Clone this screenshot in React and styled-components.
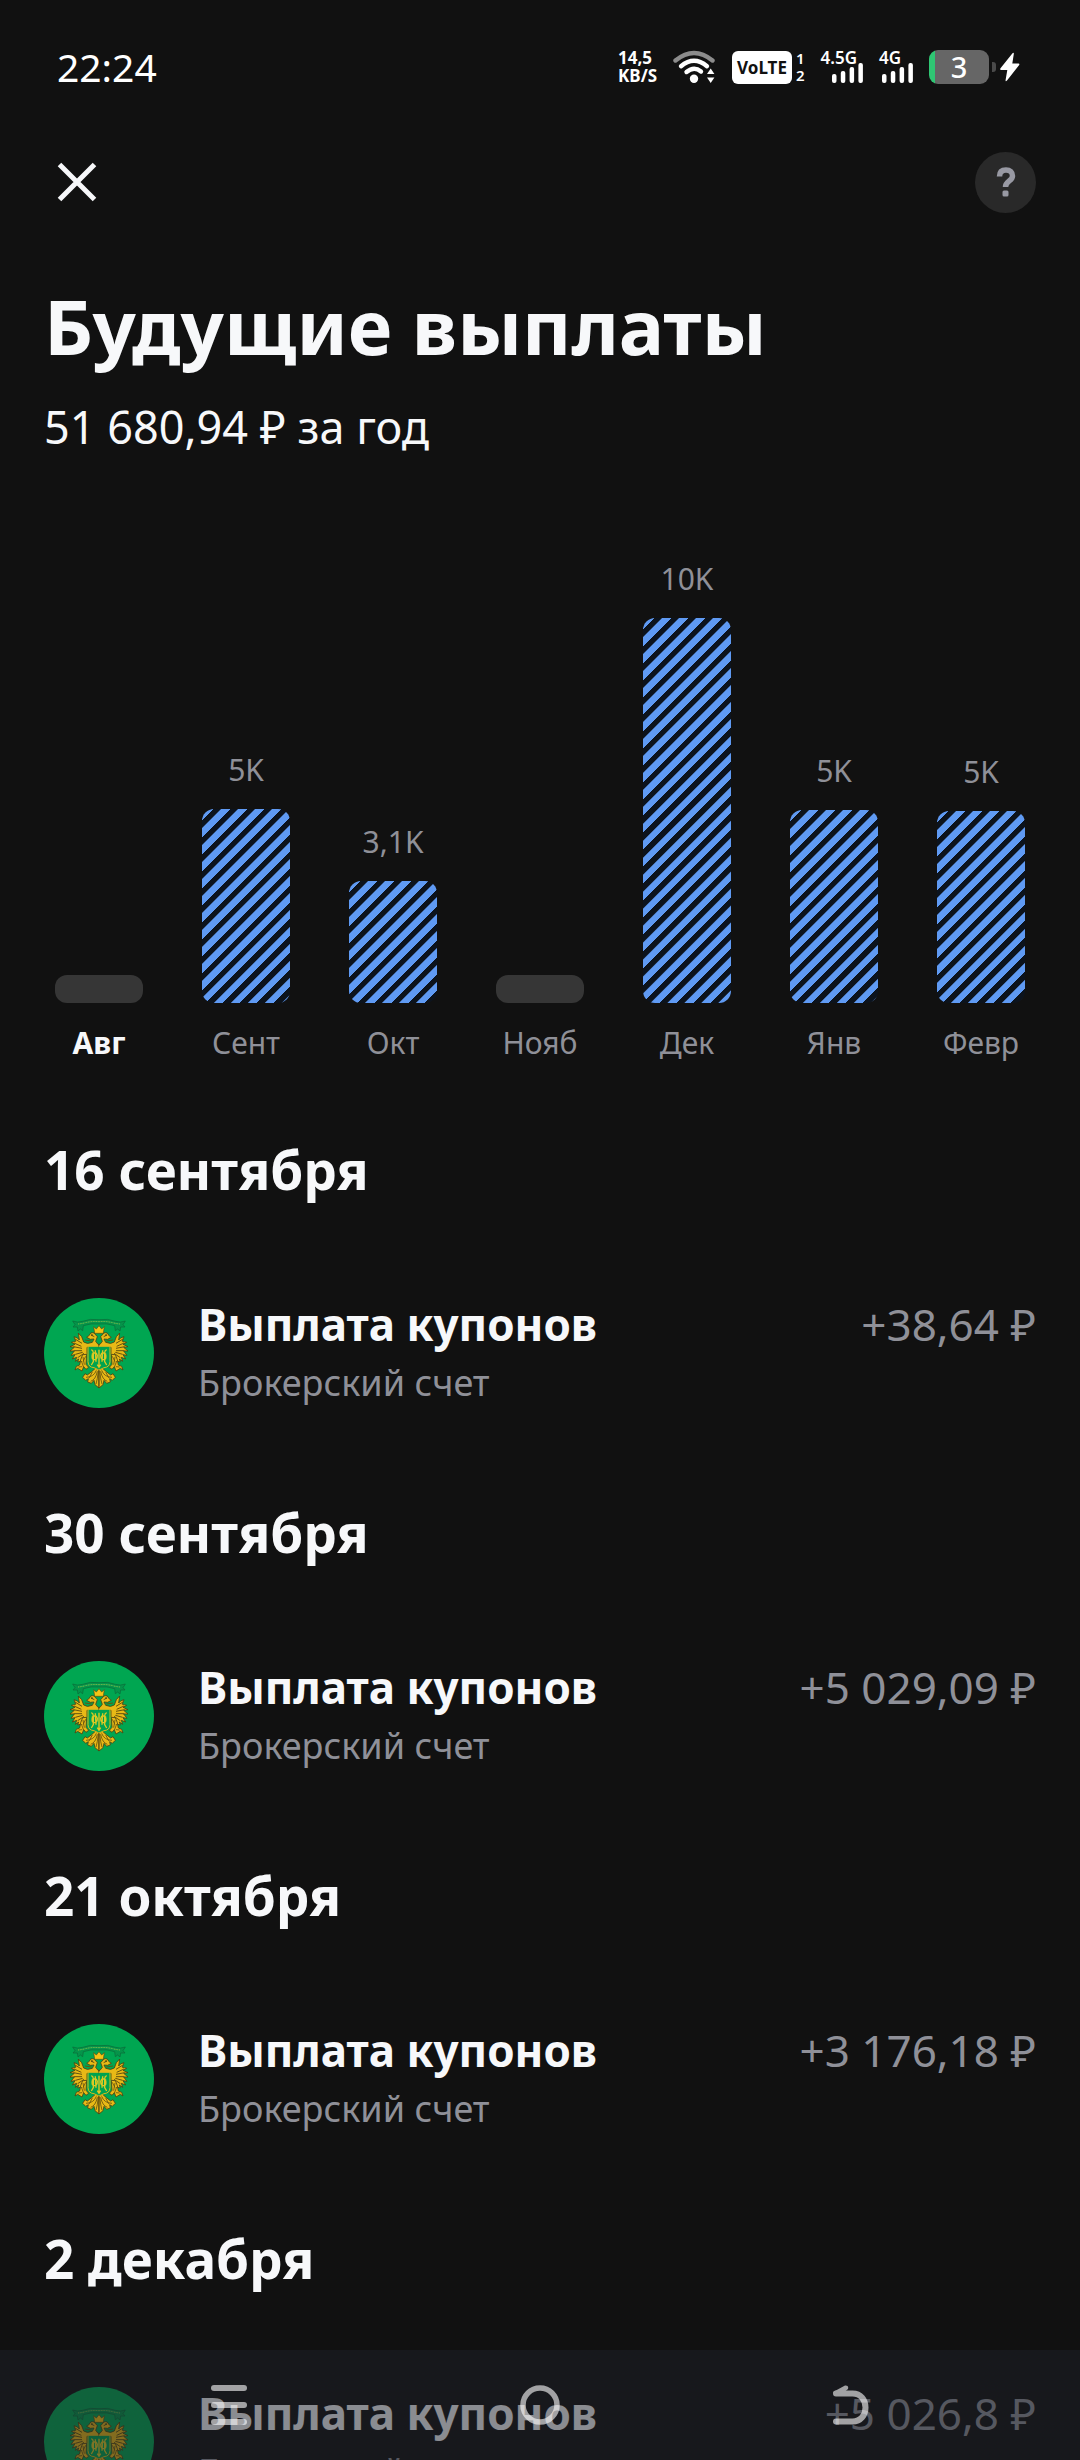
import React from "react";
import styled, { createGlobalStyle } from "styled-components";

const GlobalStyle = createGlobalStyle`
    * {
        box-sizing: border-box;
    }
    body {
        margin: 0;
        background: #111111;
        color: #f7f8fa;
        font-family: "Noto Sans", "Open Sans", sans-serif;
    }
    h1, h2, h3, p, ul {
        margin: 0;
        padding: 0;
    }
    button {
        border: none;
        padding: 0;
        background: none;
        color: inherit;
        font: inherit;
        cursor: pointer;
    }
    svg {
        display: block;
    }
`;

const Screen = styled.div`
    display: flex;
    flex-direction: column;
    height: 100vh;
    overflow: hidden;
`;

const StatusBar = styled.div`
    display: flex;
    flex-shrink: 0;
    align-items: center;
    justify-content: space-between;
    height: 134px;
    padding: 0 60px 0 57px;
    color: #ffffff;
`;

const Time = styled.span`
    font-size: 39px;
    line-height: 48px;
`;

const StatusIcons = styled.div`
    display: flex;
    align-items: center;
    gap: 16px;
`;

const NetSpeed = styled.div`
    display: flex;
    flex-direction: column;
    font-size: 17px;
    font-weight: 700;
    line-height: 18px;
`;

const Volte = styled.div`
    display: flex;
    align-items: center;
    gap: 4px;
`;

const VolteBadge = styled.span`
    padding: 0 5px;
    border-radius: 6px;
    background: #ffffff;
    color: #111111;
    font-size: 17px;
    font-weight: 700;
    line-height: 33px;
`;

const SimNumbers = styled.div`
    display: flex;
    flex-direction: column;
    font-size: 15px;
    font-weight: 600;
    line-height: 17px;
`;

const Signal = styled.div`
    display: flex;
    flex-direction: column;
    align-items: flex-start;
    min-width: 34px;
`;

const SignalLabel = styled.span`
    margin-right: 6px;
    font-size: 17px;
    font-weight: 600;
    line-height: 14px;
`;

const SignalBars = styled.svg`
    align-self: flex-end;
    margin-top: -2px;
`;

const Power = styled.div`
    display: flex;
    align-items: center;
    gap: 3px;
`;

const Battery = styled.div`
    width: 60px;
    border-radius: 9px;
    background: linear-gradient(90deg, #2fc673 6px, #666666 6px);
    font-size: 29px;
    font-weight: 500;
    line-height: 34px;
    text-align: center;
`;

const BatteryTip = styled.div`
    width: 4px;
    height: 10px;
    border-radius: 0 3px 3px 0;
    background: #4a4a4a;
`;

const TopBar = styled.header`
    display: flex;
    flex-shrink: 0;
    align-items: center;
    justify-content: space-between;
    height: 96px;
    padding: 0 44px;
`;

const CloseButton = styled.button`
    display: grid;
    place-items: center;
    width: 66px;
    height: 66px;
`;

const HelpButton = styled.button`
    display: grid;
    place-items: center;
    width: 61px;
    height: 61px;
    border-radius: 50%;
    background: #292929;
`;

const Content = styled.main`
    flex: 1;
    min-height: 0;
    padding: 48px 44px 110px;
    overflow-y: auto;
    scrollbar-width: none;
`;

const Title = styled.h1`
    font-size: 76px;
    font-weight: 700;
    line-height: 96px;
`;

const Total = styled.p`
    margin-top: 21px;
    font-size: 45px;
    line-height: 64px;
`;

const Chart = styled.div`
    display: flex;
    align-items: flex-end;
    justify-content: space-between;
    margin-top: 100px;
    padding: 0 11px;
`;

const Month = styled.div`
    display: flex;
    flex-direction: column;
    align-items: center;
    width: 88px;
    color: #8f9098;
    font-size: 30px;
    line-height: 40px;
`;

const Bar = styled.div`
    width: 100%;
    height: ${({ $height }) => $height}px;
    margin: 19px 0 20px;
    border-radius: 12px;
    background: ${({ $empty }) => $empty
        ? "#363636"
        : "repeating-linear-gradient(135deg, #0c131d 0 1px, #5f9af3 2px 8px, #0c131d 8px 12px)"};
`;

const MonthName = styled.span`
    color: ${({ $active }) => $active ? "#f7f8fa" : "#8f9098"};
    font-weight: ${({ $active }) => $active ? 700 : 400};
`;

const Day = styled.section`
    margin-top: ${({ $first }) => $first ? 71 : 88}px;
`;

const DayTitle = styled.h2`
    font-size: 53px;
    font-weight: 700;
    line-height: 72px;
`;

const Payment = styled.div`
    display: flex;
    align-items: center;
    gap: 44px;
    margin-top: 90px;
`;

const PaymentInfo = styled.div`
    display: flex;
    flex: 1;
    flex-direction: column;
    gap: 5px;
`;

const PaymentTitle = styled.h3`
    font-size: 44px;
    font-weight: 700;
    line-height: 56px;
`;

const Account = styled.p`
    color: #8f9098;
    font-size: 36px;
    line-height: 52px;
`;

const Amount = styled.span`
    align-self: flex-start;
    color: #8f9098;
    font-size: 44px;
    line-height: 56px;
    white-space: nowrap;
`;

const NavBar = styled.nav`
    position: fixed;
    right: 0;
    bottom: 0;
    left: 0;
    display: grid;
    grid-template-columns: repeat(3, 1fr);
    place-items: center;
    height: 110px;
    padding: 0 73px;
    background: rgba(29, 31, 39, 0.5);
`;

const NavButton = styled.button`
    display: grid;
    place-items: center;
    width: 80px;
    height: 80px;
    opacity: 0.6;
`;

const months = [
    { name: "Авг", height: 28, empty: true, active: true },
    { name: "Сент", height: 194, value: "5K" },
    { name: "Окт", height: 122, value: "3,1K" },
    { name: "Нояб", height: 28, empty: true },
    { name: "Дек", height: 385, value: "10K" },
    { name: "Янв", height: 193, value: "5K" },
    { name: "Февр", height: 192, value: "5K" },
];

const days = [
    { date: "16 сентября", amount: "+38,64 ₽" },
    { date: "30 сентября", amount: "+5 029,09 ₽" },
    { date: "21 октября", amount: "+3 176,18 ₽" },
    { date: "2 декабря", amount: "+5 026,8 ₽" },
];

function SignalIcon() {
    return (
        <SignalBars width="31" height="20" viewBox="0 0 31 20" fill="#fff">
            <rect x="0" y="11" width="4.5" height="9" rx="2" />
            <rect x="8.8" y="8" width="4.5" height="12" rx="2" />
            <rect x="17.6" y="4" width="4.5" height="16" rx="2" />
            <rect x="26.4" y="0" width="4.5" height="20" rx="2" />
        </SignalBars>
    );
}

function WifiIcon() {
    return (
        <svg width="43" height="34" viewBox="0 0 43 34" fill="none" strokeWidth="4.4" strokeLinecap="round">
            <path d="M2.5 10.5Q21 -4.500 39.500 10.500" stroke="#8c8c8c" />
            <path d="M8 16.200Q21 5.400 34 16.200" stroke="#fff" />
            <path d="M13.500 22Q21 15.800 28 21.500" stroke="#fff" />
            <circle cx="21" cy="28.800" r="4.200" fill="#fff" />
            <path d="M34 24l3.700-5.500 3.700 5.500zM34 27.500l3.700 5.500 3.700-5.500z" fill="#fff" />
        </svg>
    );
}

// One wing side of the eagle, mirrored for the other half
function EmblemHalf() {
    return (
        <>
            <path d="M99 8Q72 4 50 13Q34 18 20 12L27 23L21 30L34 30L36 42L43 36L50 41L52 26Q75 18 99 21" fill="#05944a" stroke="#0b6a38" strokeWidth="2" />
            <path d="M36 21Q48 20 58 17Q78 12 99 14" fill="none" stroke="#8fc14b" strokeWidth="3" strokeDasharray="3 2" />
            <path d="M24 59Q35 61 40 69L37 48L47 59L53 75Q63 83 79 76L84 66L73 67L62 61L70 55Q73 44 84 48L94 59L89 73L96 82L99 82V91H63V110Q52 119 46 132L35 135L38 126L28 133L32 121L19 126L27 113L15 115L25 102L12 102L25 91L12 89L27 82L16 76L29 73Z" fill="#e8b916" stroke="#4c4212" strokeWidth="2.500" strokeLinejoin="round" />
            <path d="M27 66L48 79M24 78L46 88M22 89L48 94M23 101L48 101M28 112L50 106M35 122L54 109M57 69L77 72M75 54L85 59" stroke="#655310" strokeWidth="3" />
            <circle cx="78" cy="54" r="2.500" fill="#3d3b12" />
            <path d="M50 113L62 112L60 142L68 151L60 157L53 149L48 162L35 154L27 159L31 148L41 144L44 128Z" fill="#e8b916" stroke="#4c4212" strokeWidth="2.500" />
            <path d="M51 120L55 143M59 118L51 134M37 150L48 149M46 132L53 151" stroke="#655310" strokeWidth="2.500" />
            <path d="M99 158L88 154L77 164L64 174L57 170L50 181L59 190L67 185L65 195L76 199L84 190L87 203L99 213Z" fill="#e8b916" stroke="#4c4212" strokeWidth="2.500" strokeLinejoin="round" />
            <path d="M91 160Q84 180 60 181M94 163Q89 188 74 193M97 161Q94 190 90 201M79 165L69 183" fill="none" stroke="#655310" strokeWidth="2.500" />
            <path d="M99 88H66V134Q67 151 84 152L99 159" fill="#00a34f" stroke="#d9b91c" strokeWidth="3" />
            <path d="M76 98Q82 100 82 108V134L76 144M78 112Q90 101 94 115Q94 129 83 128Q76 125 79 112M88 100L90 134" fill="none" stroke="#dcc924" strokeWidth="4" />
        </>
    );
}

function Emblem() {
    return (
        <svg width="110" height="110" viewBox="-66 -57 330 330" aria-hidden="true">
            <circle cx="99" cy="108" r="165" fill="#00a651" />
            <EmblemHalf />
            <g transform="translate(198 0) scale(-1 1)">
                <EmblemHalf />
            </g>
            <path d="M83 29L91 36L99 26L107 36L115 29L112 49H86Z" fill="#f4c414" stroke="#5b4d12" strokeWidth="2" />
            <path d="M99 98V150M94 143L99 151L104 143" fill="none" stroke="#e3c822" strokeWidth="4" />
            <path d="M99 161V208" stroke="#655310" strokeWidth="2" />
        </svg>
    );
}

function App() {
    return (
        <Screen>
            <GlobalStyle />
            <StatusBar>
                <Time>22:24</Time>
                <StatusIcons>
                    <NetSpeed>
                        <span>14,5</span>
                        <span>KB/S</span>
                    </NetSpeed>
                    <WifiIcon />
                    <Volte>
                        <VolteBadge>VoLTE</VolteBadge>
                        <SimNumbers>
                            <span>1</span>
                            <span>2</span>
                        </SimNumbers>
                    </Volte>
                    <Signal>
                        <SignalLabel>4.5G</SignalLabel>
                        <SignalIcon />
                    </Signal>
                    <Signal>
                        <SignalLabel>4G</SignalLabel>
                        <SignalIcon />
                    </Signal>
                    <Power>
                        <Battery>3</Battery>
                        <BatteryTip />
                        <svg width="21" height="30" viewBox="0 0 21 30" fill="#fff">
                            <path d="M13.500 1.200Q15 0 14.800 2L13.300 11.500H19.500Q21 11.700 20 13.200L8 28.500Q6.300 30 6.600 28L8.300 18H2Q.6 17.700 1.500 16.300Z" />
                        </svg>
                    </Power>
                </StatusIcons>
            </StatusBar>
            <TopBar>
                <CloseButton aria-label="Закрыть">
                    <svg width="40" height="40" viewBox="0 0 40 40" stroke="#f7f8fa" strokeWidth="5">
                        <path d="M2.500 2.500l35 35M37.500 2.500l-35 35" />
                    </svg>
                </CloseButton>
                <HelpButton aria-label="Помощь">
                    <svg width="20" height="30" viewBox="0 0 20 30" fill="none" stroke="#9899a3">
                        <path d="M3.500 9.500C3.500 5 6 3 10 3s6.500 2.300 6.500 6c0 5-7 5-7 11" strokeWidth="5.500" />
                        <rect x="6.500" y="23.500" width="6" height="6" rx="1.500" fill="#9899a3" stroke="none" />
                    </svg>
                </HelpButton>
            </TopBar>
            <Content>
                <Title>Будущие выплаты</Title>
                <Total>51 680,94 ₽ за год</Total>
                <Chart>
                    {months.map((month) => (
                        <Month key={month.name}>
                            {month.value && <span>{month.value}</span>}
                            <Bar $height={month.height} $empty={month.empty} />
                            <MonthName $active={month.active}>{month.name}</MonthName>
                        </Month>
                    ))}
                </Chart>
                {days.map((day, index) => (
                    <Day key={day.date} $first={index === 0}>
                        <DayTitle>{day.date}</DayTitle>
                        <Payment>
                            <Emblem />
                            <PaymentInfo>
                                <PaymentTitle>Выплата купонов</PaymentTitle>
                                <Account>Брокерский счет</Account>
                            </PaymentInfo>
                            <Amount>{day.amount}</Amount>
                        </Payment>
                    </Day>
                ))}
            </Content>
            <NavBar>
                <NavButton aria-label="Недавние">
                    <svg width="36" height="40" viewBox="0 0 36 40" fill="#fff">
                        <rect y="0" width="36" height="6" rx="3" />
                        <rect y="17" width="36" height="6" rx="3" />
                        <rect y="34" width="36" height="6" rx="3" />
                    </svg>
                </NavButton>
                <NavButton aria-label="Домой">
                    <svg width="40" height="40" viewBox="0 0 40 40" fill="none">
                        <circle cx="20" cy="20" r="17" stroke="#fff" strokeWidth="5.500" />
                    </svg>
                </NavButton>
                <NavButton aria-label="Назад">
                    <svg width="36" height="40" viewBox="0 0 36 40" fill="none" stroke="#fff" strokeWidth="6">
                        <path d="M3 8.500H19.500C28 8.500 32.500 15 32.500 22.500S28 36.500 19.500 36.500H3" strokeLinecap="round" />
                        <path d="M1 6.500L12 .5Q16 0 15 4L9 9H2Q-1 8 1 6.500Z" fill="#fff" stroke="none" />
                    </svg>
                </NavButton>
            </NavBar>
        </Screen>
    );
}

export default App;
